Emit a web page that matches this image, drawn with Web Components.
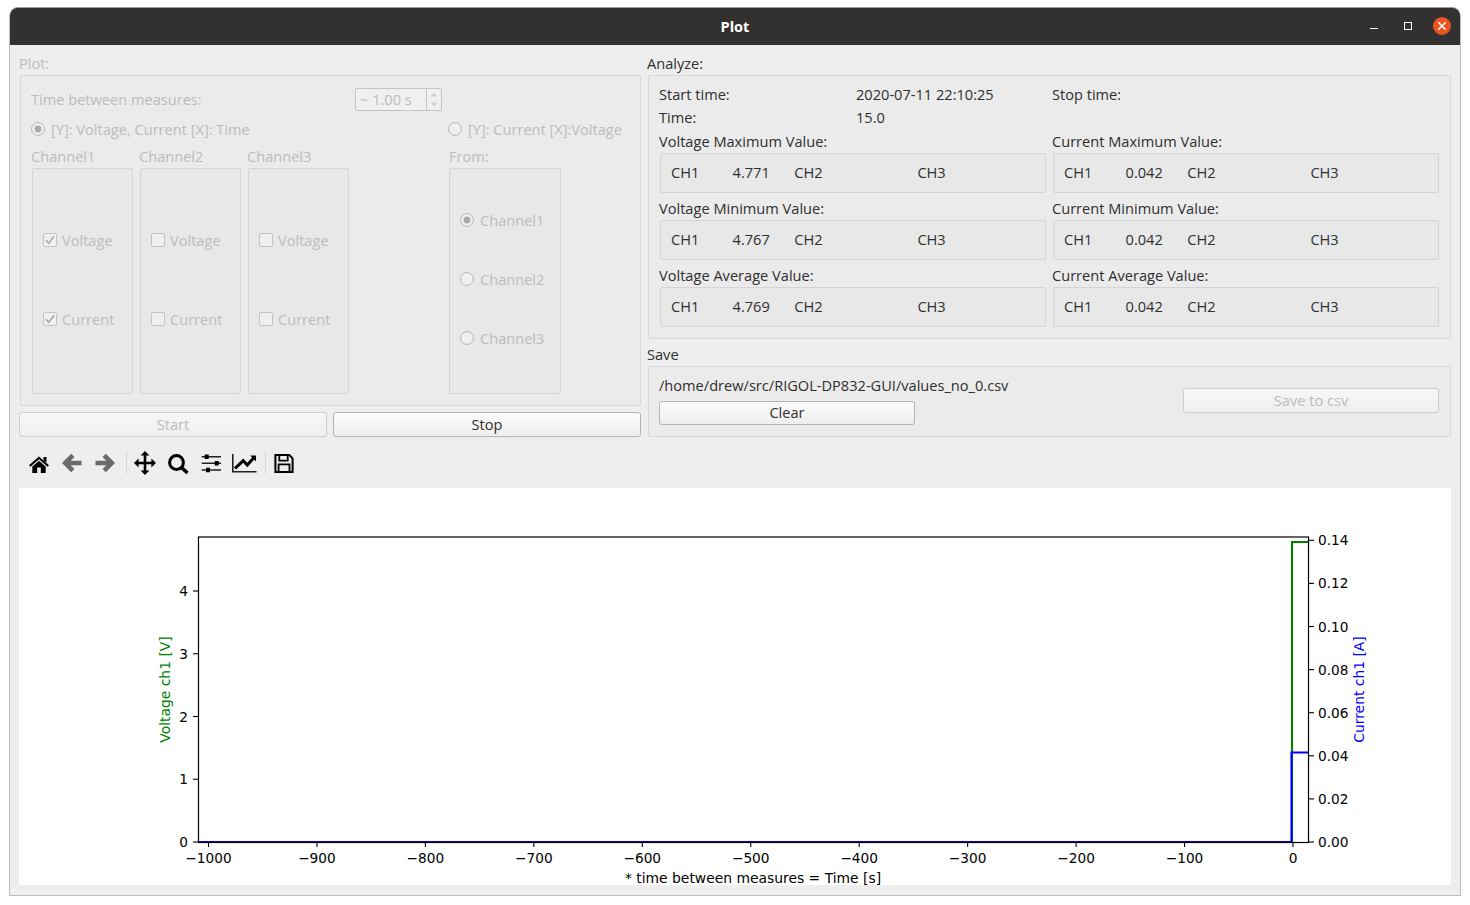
<!DOCTYPE html>
<html>
<head>
<meta charset="utf-8">
<title>Plot</title>
<style>
html,body{margin:0;padding:0;background:#fff;}
body{font-family:"Open Sans","Noto Sans",sans-serif;font-size:14.6px;color:#2f2f2f;}
</style>
</head>
<body>
<app-window title="Plot">
  <main-layout>
    <group-box slot="plot" label="Plot:" disabled frame="331"><plot-settings></plot-settings></group-box>
    <q-button slot="start" disabled>Start</q-button>
    <q-button slot="stop">Stop</q-button>
    <group-box slot="analyze" label="Analyze:" frame="264"><analyze-panel></analyze-panel></group-box>
    <group-box slot="save" label="Save" frame="71"><save-panel></save-panel></group-box>
    <nav-toolbar slot="toolbar"></nav-toolbar>
    <plot-canvas slot="canvas"></plot-canvas>
  </main-layout>
</app-window>

<script>
// small helper, every element just clones its html into an open shadow root
function shadow(el, html){
  const t = document.createElement('template');
  t.innerHTML = html;
  el.attachShadow({mode:'open'}).appendChild(t.content.cloneNode(true));
}

class AppWindow extends HTMLElement {
  constructor(){
    super();
    shadow(this, `
<style>
:host{display:flex;flex-direction:column;width:1450px;height:887px;margin:8px 0 0 9px;border:1px solid #bdbdbd;border-top:0;border-radius:9px 9px 0 0;background:#eeeeee;}
header{position:relative;flex:none;height:37px;background:#333130;border-radius:8px 8px 0 0;display:flex;align-items:center;justify-content:center;color:#fff;font-weight:700;font-size:14.5px;box-shadow:0 -1px 0 #9a9a9a;}
.ctl{position:absolute;top:0;height:37px;}
.body{flex:1;min-height:0;}
</style>
<header><span id="t"></span>
<svg class="ctl" style="right:0" width="100" height="37" viewBox="0 0 100 37">
<path d="M10 20.5h8" stroke="#fff" stroke-width="1" fill="none"/>
<rect x="44.5" y="14.5" width="7" height="7" fill="none" stroke="#fff" stroke-width="1"/>
<circle cx="82" cy="18" r="9" fill="#e95420"/>
<path d="M78.3 14.3l7.4 7.4M85.7 14.3l-7.4 7.4" stroke="#fff" stroke-width="1.5" fill="none"/>
</svg></header>
<div class="body"><slot></slot></div>`);
    this.shadowRoot.getElementById('t').textContent = this.getAttribute('title');
  }
}
customElements.define('app-window', AppWindow);

class MainLayout extends HTMLElement {
  constructor(){
    super();
    shadow(this, `
<style>
:host{display:block;padding:9px 9px 0 9px;}
.top{display:grid;grid-template-columns:622px 804px;column-gap:6px;height:383px;}
.left{display:flex;flex-direction:column;}
.btns{display:grid;grid-template-columns:308px 308px;column-gap:6px;margin-top:6px;}
.right{display:flex;flex-direction:column;gap:6px;}
.tb{height:43px;margin-top:8px;}
</style>
<div class="top">
  <div class="left"><slot name="plot"></slot><div class="btns"><slot name="start"></slot><slot name="stop"></slot></div></div>
  <div class="right"><slot name="analyze"></slot><slot name="save"></slot></div>
</div>
<div class="tb"><slot name="toolbar"></slot></div>
<slot name="canvas"></slot>`);
  }
}
customElements.define('main-layout', MainLayout);

class GroupBox extends HTMLElement {
  constructor(){
    super();
    shadow(this, `
<style>
:host{display:block;}
:host([disabled]){color:#bcbcbc;}
.lbl{box-sizing:border-box;line-height:18px;height:21px;}
.frame{margin-left:1px;box-sizing:border-box;border:1px solid #d8d8d8;border-radius:2px;background:#ebebeb;}
</style>
<div class="lbl"></div>
<div class="frame"><slot></slot></div>`);
    this.shadowRoot.querySelector('.lbl').textContent = this.getAttribute('label');
    this.shadowRoot.querySelector('.frame').style.height = this.getAttribute('frame') + 'px';
  }
}
customElements.define('group-box', GroupBox);

class QButton extends HTMLElement {
  constructor(){
    super();
    shadow(this, `
<style>
:host{display:flex;align-items:center;justify-content:center;box-sizing:border-box;height:25px;padding-bottom:2px;border:1px solid #b4b4b4;border-radius:3px;background:linear-gradient(#fbfbfb,#eeeeee);color:#2f2f2f;}
:host([disabled]){color:#bcbcbc;border-color:#cecece;background:linear-gradient(#f7f7f7,#efefef);}
</style><slot></slot>`);
  }
}
customElements.define('q-button', QButton);

class QCheck extends HTMLElement {
  constructor(){
    super();
    shadow(this, `
<style>
:host{display:flex;align-items:center;gap:5px;height:18px;}
svg{flex:none;}
</style>
<svg width="14" height="14" viewBox="0 0 14 14">
<rect x=".5" y=".5" width="13" height="13" rx="1.5" fill="#f0f0f0" stroke="#c2c2c2"/>
<path id="m" d="M3 7.2l2.8 3L11 3.2" fill="none" stroke="#a9a9a9" stroke-width="1.6"/>
</svg><slot></slot>`);
    if(!this.hasAttribute('checked')) this.shadowRoot.getElementById('m').remove();
  }
}
customElements.define('q-check', QCheck);

class QRadio extends HTMLElement {
  constructor(){
    super();
    shadow(this, `
<style>
:host{display:flex;align-items:center;gap:6px;height:18px;white-space:nowrap;}
svg{flex:none;}
</style>
<svg width="14" height="14" viewBox="0 0 14 14">
<circle cx="7" cy="7" r="6.4" fill="#f0f0f0" stroke="#b4b4b4"/>
<circle id="m" cx="7" cy="7" r="3.4" fill="#a9a9a9"/>
</svg><slot></slot>`);
    if(!this.hasAttribute('checked')) this.shadowRoot.getElementById('m').remove();
  }
}
customElements.define('q-radio', QRadio);

class SpinBox extends HTMLElement {
  constructor(){
    super();
    shadow(this, `
<style>
:host{display:flex;box-sizing:border-box;width:87px;height:23px;border:1px solid #c4c4c4;border-radius:2px;background:#f0f0f0;align-items:center;color:#bcbcbc;}
.v{flex:1;padding:0 0 2px 4px;white-space:nowrap;}
.arrows{flex:none;width:14px;height:21px;border-left:1px solid #c4c4c4;}
svg{display:block;}
</style>
<div class="v"><slot></slot></div>
<div class="arrows"><svg width="14" height="21" viewBox="0 0 14 21"><path d="M3.5 7.5l3.5-4 3.5 4zM3.5 13.5l3.5 4 3.5-4z" fill="#cfcfcf"/></svg></div>`);
  }
}
customElements.define('spin-box', SpinBox);

class PlotSettings extends HTMLElement {
  constructor(){
    super();
    shadow(this, `
<style>
:host{display:grid;grid-template-columns:108px 108px 108px 93px 1fr;grid-template-rows:23px 37px 20px 226px;padding:12px 10px 0 10px;color:#bcbcbc;--box:#e8e8e8;}
.wide{grid-column:1/4;align-self:center;margin-bottom:2px;}
.spin{grid-column:4/6;}
.r2{grid-column:5;align-self:center;margin-bottom:2px;}
.ch{align-self:start;line-height:16px;}
.from{grid-column:5;align-self:start;line-height:16px;padding-left:1px;}
.box{box-sizing:border-box;margin-left:1px;width:101px;border:1px solid #d4d4d4;border-radius:2px;background:var(--box);display:flex;flex-direction:column;padding:62px 0 0 10px;gap:61px;}
.box.f{grid-column:5;width:112px;padding-top:42px;gap:41px;}
</style>
<div class="wide">Time between measures:</div><div class="spin"><spin-box>~ 1.00 s</spin-box></div>
<q-radio class="wide" checked>[Y]: Voltage, Current [X]: Time</q-radio>
<q-radio class="r2" style="grid-column:5;grid-row:2">[Y]: Current [X]:Voltage</q-radio>
<div class="ch" style="grid-column:1;grid-row:3">Channel1</div>
<div class="ch" style="grid-column:2;grid-row:3">Channel2</div>
<div class="ch" style="grid-column:3;grid-row:3">Channel3</div>
<div class="from" style="grid-row:3">From:</div>
<div class="box" style="grid-column:1;grid-row:4"><q-check checked>Voltage</q-check><q-check checked>Current</q-check></div>
<div class="box" style="grid-column:2;grid-row:4"><q-check>Voltage</q-check><q-check>Current</q-check></div>
<div class="box" style="grid-column:3;grid-row:4"><q-check>Voltage</q-check><q-check>Current</q-check></div>
<div class="box f" style="grid-row:4"><q-radio checked>Channel1</q-radio><q-radio>Channel2</q-radio><q-radio>Channel3</q-radio></div>`);
  }
}
customElements.define('plot-settings', PlotSettings);

class StatBox extends HTMLElement {
  constructor(){
    super();
    shadow(this, `
<style>
:host{display:block;height:67px;}
.lbl{line-height:16px;height:18px;margin-bottom:2px;}
.box{box-sizing:border-box;margin-left:1px;width:386px;height:40px;border:1px solid #d4d4d4;background:#e8e8e8;border-radius:2px;padding:0 10px 2px;display:grid;grid-template-columns:repeat(6,61.6px);align-items:center;}
</style>
<div class="lbl"></div>
<div class="box"><span>CH1</span><span id="v"></span><span>CH2</span><span></span><span>CH3</span><span></span></div>`);
    this.shadowRoot.querySelector('.lbl').textContent = this.getAttribute('label');
    this.shadowRoot.getElementById('v').textContent = this.getAttribute('ch1');
  }
}
customElements.define('stat-box', StatBox);

class AnalyzePanel extends HTMLElement {
  constructor(){
    super();
    shadow(this, `
<style>
:host{display:block;padding:6px 0 0 10px;}
.head{display:grid;grid-template-columns:197px 196px 197px;grid-auto-rows:23px;align-items:center;margin-bottom:5px;}
.stats{display:grid;grid-template-columns:393px 393px;}
</style>
<div class="head">
  <span>Start time:</span><span>2020-07-11 22:10:25</span><span>Stop time:</span>
  <span>Time:</span><span>15.0</span><span></span>
</div>
<div class="stats">
  <stat-box label="Voltage Maximum Value:" ch1="4.771"></stat-box>
  <stat-box label="Current Maximum Value:" ch1="0.042"></stat-box>
  <stat-box label="Voltage Minimum Value:" ch1="4.767"></stat-box>
  <stat-box label="Current Minimum Value:" ch1="0.042"></stat-box>
  <stat-box label="Voltage Average Value:" ch1="4.769"></stat-box>
  <stat-box label="Current Average Value:" ch1="0.042"></stat-box>
</div>`);
  }
}
customElements.define('analyze-panel', AnalyzePanel);

class SavePanel extends HTMLElement {
  constructor(){
    super();
    shadow(this, `
<style>
:host{display:grid;grid-template-columns:256px 256px 256px;grid-template-rows:18px 24px;column-gap:6px;row-gap:6px;padding:10px 0 0 10px;}
.path{grid-column:1/3;line-height:16px;white-space:nowrap;}
.csv{grid-column:3;grid-row:1/3;align-self:start;margin-top:11px;}
.clear{grid-column:1;grid-row:2;height:24px;}
</style>
<div class="path">/home/drew/src/RIGOL-DP832-GUI/values_no_0.csv</div>
<q-button class="clear">Clear</q-button>
<q-button class="csv" disabled>Save to csv</q-button>`);
  }
}
customElements.define('save-panel', SavePanel);

class NavToolbar extends HTMLElement {
  constructor(){
    super();
    shadow(this, `
<style>
:host{display:flex;align-items:center;height:35px;padding-left:4px;}
.b{flex:none;width:32px;margin-right:1px;height:24px;display:flex;justify-content:center;}
.b.x{margin-right:0;}
.sep{flex:none;width:1px;height:23px;background:#d6d6d6;margin:0 2px 0 5px;}
.sep.s2{margin-left:4px;}
svg{display:block;}
</style>
<div class="b"><svg width="24" height="24" viewBox="0 0 24 24"><path d="M2 14.2L12 5.4l10 8.8-1.4 1.5L12 8.2l-8.6 7.5zM16.5 6h3v5.5l-3-2.6z" fill="#000"/><path d="M5.3 15.5L12 9.7l6.7 5.8V22h-4.9v-5.5h-3.6V22H5.3z" fill="#000"/></svg></div>
<div class="b"><svg width="24" height="24" viewBox="0 0 24 24"><path d="M21.5 12H6M12.8 4.4L5.2 12l7.6 7.6" fill="none" stroke="#6b6b6b" stroke-width="4.6"/></svg></div>
<div class="b x"><svg width="24" height="24" viewBox="0 0 24 24"><path d="M2.5 12H18M11.2 4.4l7.6 7.6-7.6 7.6" fill="none" stroke="#6b6b6b" stroke-width="4.6"/></svg></div>
<div class="sep"></div>
<div class="b"><svg width="24" height="24" viewBox="0 0 24 24"><path d="M12 4v16M4 12h16" stroke="#000" stroke-width="2.6"/><path d="M12 0l4.4 4.6H7.6zM12 24l4.4-4.6H7.6zM1 12l4.6-4.4v8.8zM23 12l-4.6-4.4v8.8z" fill="#000"/></svg></div>
<div class="b"><svg width="24" height="24" viewBox="0 0 24 24"><circle cx="10.5" cy="11.5" r="6.9" fill="none" stroke="#000" stroke-width="3"/><path d="M15.5 16.5l6 5.5" stroke="#000" stroke-width="3.6" fill="none"/></svg></div>
<div class="b"><svg width="24" height="24" viewBox="0 0 24 24"><path d="M2.7 5.7H22M2.7 12.3H22M2.7 19H22" stroke="#222" stroke-width="1.6" fill="none"/><path d="M5.7 3.4h4v4.6h-4zM15.7 10h4v4.6h-4zM7 16.7h4v4.6H7z" fill="#000"/></svg></div>
<div class="b"><svg width="25" height="24" viewBox="0 0 25 24"><path d="M.8 3v17.8H24.5" fill="none" stroke="#222" stroke-width="1.6"/><path d="M3 17.3l8.3-7.6 4 4.3L22 6.4" fill="none" stroke="#000" stroke-width="3"/><path d="M18.2 4.6H24v5.8z" fill="#000"/></svg></div>
<div class="sep s2"></div>
<div class="b"><svg width="24" height="24" viewBox="0 0 24 24"><path d="M3.4 3.9h13.8l3.4 3.4v13.8H3.4z" fill="none" stroke="#000" stroke-width="2"/><path d="M7.3 4v5.7h8.4V4M6.6 21v-7.6h10.9V21" fill="none" stroke="#000" stroke-width="1.8"/></svg></div>`);
  }
}
customElements.define('nav-toolbar', NavToolbar);

// matplotlib axes, drawn on page coordinates so numbers can be read off the screenshot
class PlotCanvas extends HTMLElement {
  constructor(){
    super();
    let t = '';
    const tick = (x1,y1,x2,y2) => `<line x1="${x1}" y1="${y1}" x2="${x2}" y2="${y2}" stroke="#000" stroke-width="1.1"/>`;
    const label = (x,y,a,s) => `<text x="${x}" y="${y}" text-anchor="${a}">${s}</text>`;
    for(let i=0;i<=10;i++){
      const x = 208.5 + i*108.45;
      const v = (i-10)*100;
      t += tick(x,842,x,847) + label(x,863,'middle',v<0?'\u2212'+(-v):'0');
    }
    for(let i=0;i<=4;i++){
      const y = 842 - i*62.75;
      t += tick(193,y,198,y) + label(188,y+5,'end',i);
    }
    for(let i=0;i<=7;i++){
      const y = 842 - i*43.1;
      t += tick(1309,y,1314,y) + label(1318,y+5,'start',(i*0.02).toFixed(2));
    }
    shadow(this, `
<style>
:host{display:block;width:1432px;height:397px;background:#fff;}
svg{display:block;}
text{font-family:"DejaVu Sans",sans-serif;font-size:13.7px;fill:#000;}
text.ax{font-size:13.89px;}
</style>
<svg width="1432" height="397" viewBox="19 488 1432 397">
<path d="M198 842H1292V542H1309" fill="none" stroke="#008000" stroke-width="2.1"/>
<path d="M198 842H1291.5V752.5H1309" fill="none" stroke="#0000ff" stroke-width="2.1"/>
<rect x="198.5" y="537" width="1110" height="305.5" fill="none" stroke="#000" stroke-width="1.2"/>
${t}
<text class="ax" x="753" y="883" text-anchor="middle">* time between measures = Time [s]</text>
<text class="ax" transform="translate(170 689.5) rotate(-90)" text-anchor="middle" style="fill:#008000">Voltage ch1 [V]</text>
<text class="ax" transform="translate(1364 689.5) rotate(-90)" text-anchor="middle" style="fill:#0000ff">Current ch1 [A]</text>
</svg>`);
  }
}
customElements.define('plot-canvas', PlotCanvas);
</script>
</body>
</html>
